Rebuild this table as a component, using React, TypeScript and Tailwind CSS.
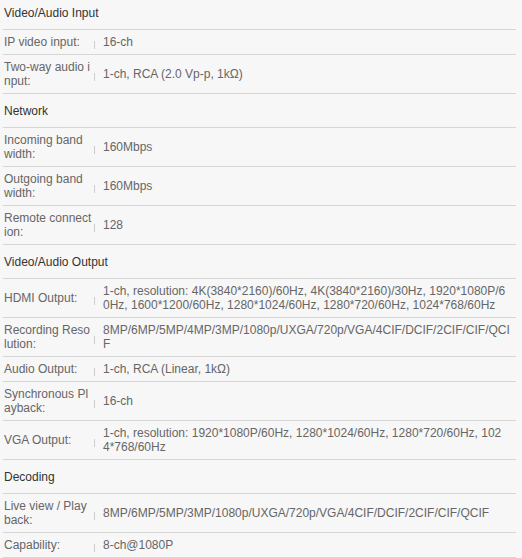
import React from "react";

type Row =
  | { kind: "h"; title: string }
  | { kind: "r"; label: string[]; value: string[] };

const rows: Row[] = [
  { kind: "h", title: "Video/Audio Input" },
  { kind: "r", label: ["IP video input:"], value: ["16-ch"] },
  { kind: "r", label: ["Two-way audio i", "nput:"], value: ["1-ch, RCA (2.0 Vp-p, 1kΩ)"] },
  { kind: "h", title: "Network" },
  { kind: "r", label: ["Incoming band", "width:"], value: ["160Mbps"] },
  { kind: "r", label: ["Outgoing band", "width:"], value: ["160Mbps"] },
  { kind: "r", label: ["Remote connect", "ion:"], value: ["128"] },
  { kind: "h", title: "Video/Audio Output" },
  {
    kind: "r",
    label: ["HDMI Output:"],
    value: [
      "1-ch, resolution: 4K(3840*2160)/60Hz, 4K(3840*2160)/30Hz, 1920*1080P/6",
      "0Hz, 1600*1200/60Hz, 1280*1024/60Hz, 1280*720/60Hz, 1024*768/60Hz",
    ],
  },
  {
    kind: "r",
    label: ["Recording Reso", "lution:"],
    value: ["8MP/6MP/5MP/4MP/3MP/1080p/UXGA/720p/VGA/4CIF/DCIF/2CIF/CIF/QCI", "F"],
  },
  { kind: "r", label: ["Audio Output:"], value: ["1-ch, RCA (Linear, 1kΩ)"] },
  { kind: "r", label: ["Synchronous Pl", "ayback:"], value: ["16-ch"] },
  {
    kind: "r",
    label: ["VGA Output:"],
    value: [
      "1-ch, resolution: 1920*1080P/60Hz, 1280*1024/60Hz, 1280*720/60Hz, 102",
      "4*768/60Hz",
    ],
  },
  { kind: "h", title: "Decoding" },
  {
    kind: "r",
    label: ["Live view / Play", "back:"],
    value: ["8MP/6MP/5MP/3MP/1080p/UXGA/720p/VGA/4CIF/DCIF/2CIF/CIF/QCIF"],
  },
  { kind: "r", label: ["Capability:"], value: ["8-ch@1080P"] },
];

export default function App() {
  return (
    <div
      className="min-h-screen w-full bg-[#f7f7f7] overflow-hidden"
      style={{ fontFamily: '"Liberation Sans", Arial, sans-serif' }}
    >
      <div className="ml-[3px] w-[513px] -mt-[4px] text-[12px] leading-[14px]">
        {rows.map((r, i) =>
          r.kind === "h" ? (
            <div
              key={i}
              className="border-b border-[#d6d6d6] pl-[1px] pt-[10px] pb-[9px] text-[#333333]"
            >
              {r.title}
            </div>
          ) : (
            <div
              key={i}
              className="flex items-center border-b border-[#d6d6d6] pl-[1px] py-[5px] text-[#666666]"
            >
              <div className="w-[88px] shrink-0">
                {r.label.map((l, j) => (
                  <div key={j} className="whitespace-nowrap">
                    {l}
                  </div>
                ))}
              </div>
              <span className="ml-[2px] mt-[5px] h-[8px] w-px shrink-0 bg-[#cccccc]" />
              <div className="ml-[8px] flex-1">
                {r.value.map((v, j) => (
                  <div key={j} className="whitespace-nowrap">
                    {v}
                  </div>
                ))}
              </div>
            </div>
          )
        )}
      </div>
    </div>
  );
}
